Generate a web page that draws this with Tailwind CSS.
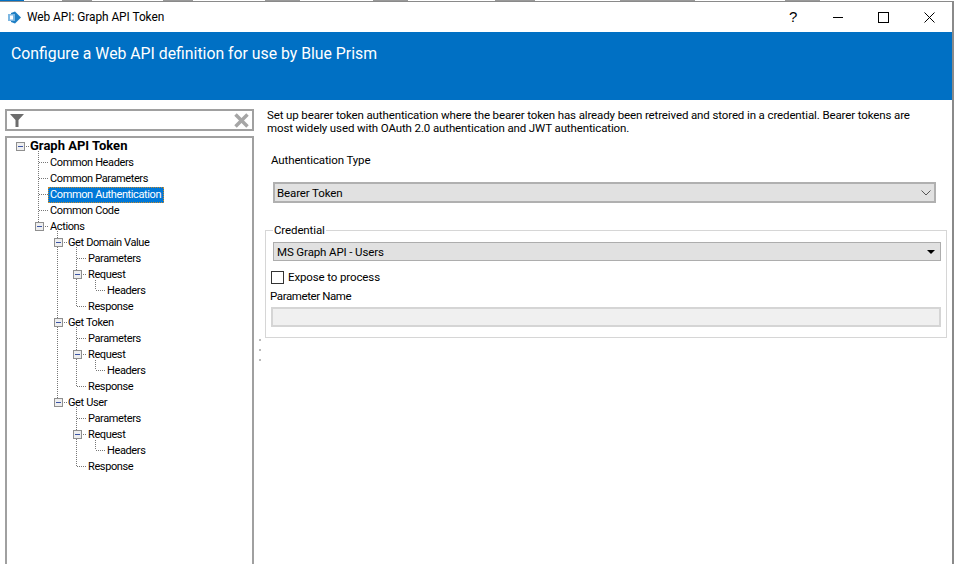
<!DOCTYPE html>
<html lang="en">
<head>
    <meta charset="UTF-8">
    <meta name="viewport" content="width=device-width, initial-scale=1.0">
    <title>Web API: Graph API Token</title>
    <script src="https://cdn.jsdelivr.net/npm/@tailwindcss/browser@4"></script>
</head>
<body class="bg-white w-[955px] h-[564px] overflow-hidden font-['Roboto','Liberation_Sans',sans-serif] text-[11.5px] tracking-[-0.12px] text-black">
<!-- sliver of the window behind -->
<div class="h-px flex w-[954px]">
    <div class="w-6 bg-[#0070c4]"></div>
    <div class="ml-[38px] w-[30px] bg-[#999]"></div>
    <div class="ml-[71px] w-[30px] bg-[#999]"></div>
    <div class="ml-[72px] w-[35px] bg-[#999]"></div>
    <div class="ml-[73px] w-[35px] bg-[#999]"></div>
    <div class="ml-[87px] w-[40px] bg-[#999]"></div>
    <div class="ml-[85px] w-[75px] bg-[#999]"></div>
    <div class="ml-[90px] w-[35px] bg-[#999]"></div>
</div>
<div class="w-[954px] h-[563px] border-t border-r-2 border-[#8a8a8a] flex flex-col">
    <!-- title bar -->
    <div class="h-[30px] shrink-0 flex items-center pl-[8px]">
        <svg width="13" height="13" viewBox="0 0 13 13"><path d="M3 2 L7 0.5 L13 6.5 L7 12.5 L3 11 Z" fill="#1f7fc4"/><rect x="0" y="3" width="7" height="7" fill="#7db7e2"/><rect x="2" y="4.5" width="3" height="4" fill="#fff"/></svg>
        <span class="ml-[6px] mt-[2px] text-[11.9px] tracking-[-0.05px]">Web API: Graph API Token</span>
        <div class="ml-auto flex items-center">
            <span class="w-[56px] text-center text-[15px] font-['Liberation_Sans',sans-serif]">?</span>
            <svg class="ml-[12px]" width="10" height="10" viewBox="0 0 10 10"><path d="M0 5.5H10" stroke="#000"/></svg>
            <svg class="ml-[35px]" width="11" height="11" viewBox="0 0 11 11"><rect x=".5" y=".5" width="10" height="10" fill="none" stroke="#000"/></svg>
            <svg class="ml-[35px] mr-[17px]" width="11" height="11" viewBox="0 0 11 11"><path d="M.5 .5L10.5 10.5M10.5 .5L.5 10.5" stroke="#000"/></svg>
        </div>
    </div>
    <!-- header -->
    <div class="h-[68px] shrink-0 bg-[#0070c4] text-white text-[15.8px] tracking-normal pl-[11px] pt-[10px]">Configure a Web API definition for use by Blue Prism</div>
    <div class="flex-1 flex min-h-0">
        <!-- left panel -->
        <div class="w-[249px] ml-[5px] shrink-0 flex flex-col pt-[9px]">
            <div class="h-[22px] border-2 border-[#a0a0a0] flex items-center justify-between px-[3px]">
                <svg width="14" height="14" viewBox="0 0 14 14"><path d="M0 1H14L8.5 7V14H5.5V7Z" fill="#6d6d6d"/></svg>
                <svg width="15" height="15" viewBox="0 0 15 15"><path d="M1.5 1.5L13.5 13.5M13.5 1.5L1.5 13.5" stroke="#a6a6a6" stroke-width="3.5"/></svg>
            </div>
            <div class="relative flex-1 mt-[5px] border-x-2 border-t-2 border-[#a0a0a0] text-[11px] tracking-[-0.38px] leading-[18px]">
                <!-- tree connectors, coordinates relative to this box -->
                <svg class="absolute left-[-2px] top-[-2px]" width="249" height="340" viewBox="5 136 249 340">
                    <g fill="none" stroke="#777" stroke-dasharray="1 1">
                        <path d="M24 146.5H29M38.5 151V226M39 162.5H48M39 178.5H48M39 194.5H48M39 210.5H48"/>
                        <path d="M43 226.5H48M57.5 231V402M62 242.5H67M62 322.5H67M62 402.5H67"/>
                        <path d="M76.5 247V306M77 258.5H86M81 274.5H86M77 306.5H86M95.5 280V290M96 290.5H105"/>
                        <path d="M76.5 327V386M77 338.5H86M81 354.5H86M77 386.5H86M95.5 360V370M96 370.5H105"/>
                        <path d="M76.5 407V466M77 418.5H86M81 434.5H86M77 466.5H86M95.5 440V450M96 450.5H105"/>
                    </g>
                    <g fill="#eee" stroke="#8f8f8f">
                        <rect x="16.5" y="142.5" width="8" height="8"/><rect x="35.5" y="222.5" width="8" height="8"/>
                        <rect x="54.5" y="238.5" width="8" height="8"/><rect x="73.5" y="270.5" width="8" height="8"/>
                        <rect x="54.5" y="318.5" width="8" height="8"/><rect x="73.5" y="350.5" width="8" height="8"/>
                        <rect x="54.5" y="398.5" width="8" height="8"/><rect x="73.5" y="430.5" width="8" height="8"/>
                    </g>
                    <path d="M18 146.5H23M37 226.5H42M56 242.5H61M75 274.5H80M56 322.5H61M75 354.5H80M56 402.5H61M75 434.5H80" stroke="#3b55a5"/>
                </svg>
                <div class="pl-[23px] h-4 leading-4 font-bold text-[13px] tracking-normal">Graph API Token</div>
                <div class="pl-[43px] h-4">Common Headers</div>
                <div class="pl-[43px] h-4">Common Parameters</div>
                <div class="pl-[41px] h-4"><span class="inline-block h-4 mt-px pl-[2px] pr-[3px] bg-[#0078d7] text-white leading-4 outline-1 outline-dotted outline-[#c98a2b] -outline-offset-1">Common Authentication</span></div>
                <div class="pl-[43px] h-4">Common Code</div>
                <div class="pl-[43px] h-4">Actions</div>
                <div class="pl-[61px] h-4">Get Domain Value</div>
                <div class="pl-[81px] h-4">Parameters</div>
                <div class="pl-[81px] h-4">Request</div>
                <div class="pl-[100px] h-4">Headers</div>
                <div class="pl-[81px] h-4">Response</div>
                <div class="pl-[61px] h-4">Get Token</div>
                <div class="pl-[81px] h-4">Parameters</div>
                <div class="pl-[81px] h-4">Request</div>
                <div class="pl-[100px] h-4">Headers</div>
                <div class="pl-[81px] h-4">Response</div>
                <div class="pl-[61px] h-4">Get User</div>
                <div class="pl-[81px] h-4">Parameters</div>
                <div class="pl-[81px] h-4">Request</div>
                <div class="pl-[100px] h-4">Headers</div>
                <div class="pl-[81px] h-4">Response</div>
            </div>
        </div>
        <!-- splitter -->
        <div class="w-[11px] shrink-0 flex flex-col items-center gap-[8px] pt-[239px]">
            <div class="w-[2px] h-[2px] bg-[#bbb]"></div>
            <div class="w-[2px] h-[2px] bg-[#bbb]"></div>
            <div class="w-[2px] h-[2px] bg-[#bbb]"></div>
        </div>
        <!-- right panel -->
        <div class="flex-1 min-w-0 pt-[9px] pr-[5px]">
            <p class="pl-[2px] leading-[13px] w-[655px]">Set up bearer token authentication where the bearer token has already been retreived and stored in a credential. Bearer tokens are most widely used with OAuth 2.0 authentication and JWT authentication.</p>
            <div class="pl-[6px] mt-[17px] leading-4">Authentication Type</div>
            <div class="ml-[8px] mr-[11px] mt-[14px] h-[21px] bg-[#e1e1e1] border-2 border-[#b0b0b0] flex items-center justify-between pl-[2px] pr-[3px]">
                <span class="pt-[2px]">Bearer Token</span>
                <svg width="10" height="6" viewBox="0 0 10 6"><path d="M.5 .5L5 5L9.5 .5" fill="none" stroke="#555"/></svg>
            </div>
            <fieldset class="mt-[19px] h-[116px] border border-[#d6d6d6] px-[6px]">
                <legend class="ml-[1px] px-[1px] leading-4">Credential</legend>
                <div class="h-[19px] mt-[4px] ml-[1px] mr-[-1px] bg-[#e1e1e1] border border-[#adadad] flex items-center justify-between pl-[3px] pr-[5px]">
                    <span class="pt-[2px]">MS Graph API - Users</span>
                    <svg width="8" height="4" viewBox="0 0 8 4"><path d="M0 0H8L4 4Z" fill="#000"/></svg>
                </div>
                <div class="flex items-center mt-[10px] h-[13px] ml-[-1px]">
                    <div class="w-[13px] h-[13px] border border-[#333] bg-white"></div>
                    <span class="ml-[4px]">Expose to process</span>
                </div>
                <div class="ml-[-2px] mt-[4px] leading-4 tracking-[-0.4px]">Parameter Name</div>
                <div class="ml-[-1px] mr-[-1px] mt-[3px] h-[20px] bg-[#f0f0f0] border-2 border-[#d5d5d5]"></div>
            </fieldset>
        </div>
    </div>
</div>
</body>
</html>
